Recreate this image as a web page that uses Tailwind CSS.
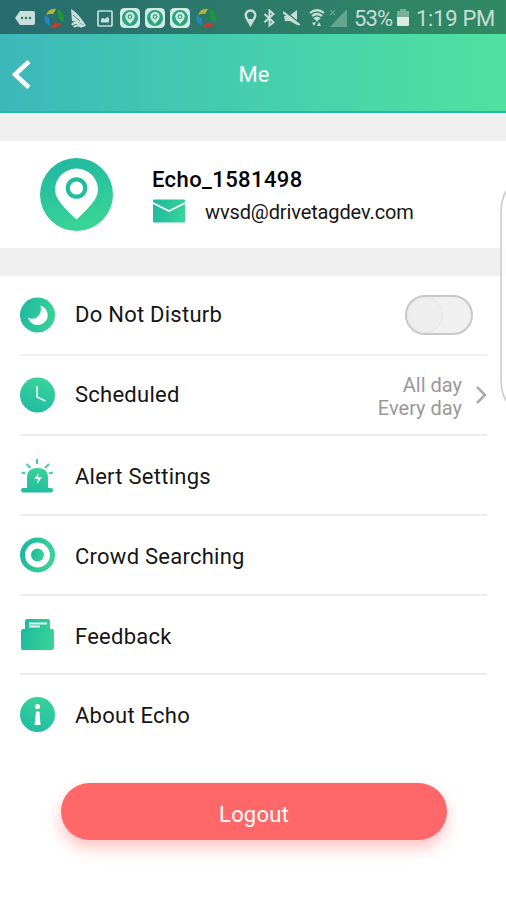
<!DOCTYPE html>
<html lang="en">
<head>
    <meta charset="UTF-8">
    <meta name="viewport" content="width=device-width, initial-scale=1.0">
    <title>Me</title>
    <script src="https://cdn.jsdelivr.net/npm/@tailwindcss/browser@4"></script>
</head>
<body class="relative h-[900px] w-[506px] overflow-hidden bg-white font-[Roboto,sans-serif] text-[22px] text-[#151515]">
    <!-- Shared gradients and symbols -->
    <svg class="absolute h-0 w-0">
        <defs>
            <linearGradient id="down" x1="0" y1="0" x2="0.3" y2="1">
                <stop offset="0" stop-color="#1fb5a3"></stop>
                <stop offset="1" stop-color="#38d395"></stop>
            </linearGradient>
            <linearGradient id="up" x1="0.2" y1="1" x2="0.5" y2="0">
                <stop offset="0" stop-color="#20bba2"></stop>
                <stop offset="1" stop-color="#38d29a"></stop>
            </linearGradient>
            <linearGradient id="across" x1="0" y1="0.3" x2="1" y2="0.5">
                <stop offset="0" stop-color="#1fb8a1"></stop>
                <stop offset="1" stop-color="#37d397"></stop>
            </linearGradient>
            <symbol id="swirl" viewBox="0 0 20 20">
                <path d="M2 7C4 2 8 0 12 1L9 6Q6 5 2 7Z" fill="#b5b82e"></path>
                <path d="M13 1C19 3 21 9 19 14L14 10Q15 6 13 1Z" fill="#1c9b35"></path>
                <path d="M18 15C15 20 10 21 7 19L11 14Q14 16 18 15Z" fill="#c93a31"></path>
                <path d="M6 18C1 16-1 11 1 7L6 11Q5 14 6 18Z" fill="#2387c0"></path>
            </symbol>
            <symbol id="app" viewBox="0 0 20 20">
                <rect width="20" height="20" rx="4.5" fill="#d3eae2"></rect>
                <circle cx="10" cy="10" r="8" fill="#27a57f"></circle>
                <path d="M10 16C7 13 5.3 11 5.3 8.6a4.7 4.7 0 0 1 9.4 0C14.7 11 13 13 10 16Z" fill="#d3eae2"></path>
                <circle cx="10" cy="8.7" r="1.8" fill="none" stroke="#27a57f" stroke-width="1.2"></circle>
            </symbol>
        </defs>
    </svg>

    <!-- Status bar -->
    <div class="flex h-[34px] items-center bg-linear-to-r from-[#286b6f] to-[#318a62] pt-[2px] pl-[14px] text-[#c8ddd5]">
        <svg class="h-4 w-[21px]" viewBox="0 0 21 16">
            <path d="M6 1h13a2 2 0 0 1 2 2v10a2 2 0 0 1-2 2H6L1 8Z" fill="#c8dfdc"></path>
            <circle cx="8" cy="8" r="1.2" fill="#286f6d"></circle>
            <circle cx="12" cy="8" r="1.2" fill="#286f6d"></circle>
            <circle cx="16" cy="8" r="1.2" fill="#286f6d"></circle>
        </svg>
        <svg class="ml-[9px] h-5 w-5"><use href="#swirl"></use></svg>
        <svg class="ml-[6px] h-[19px] w-[17px]" viewBox="0 0 17 19">
            <path d="M1 0C6 3 12 9 16 17L10 14L2 12Z" fill="#c8dfdc"></path>
            <path d="M2 16Q5 12 9 15T15 16M4 18Q7 15 12 18" fill="none" stroke="#c8dfdc" stroke-width="2.200"></path>
            <path d="M3 6l7 6" stroke="#286f6d" stroke-width=".7"></path>
        </svg>
        <svg class="ml-[10px] h-[17px] w-4" viewBox="0 0 16 17">
            <rect x="1" y="1" width="14" height="15" rx="1" fill="none" stroke="#c8dfd9" stroke-width="1.7"></rect>
            <path d="M4 12.500V9l2-1 2 1 2-2 2 1v4.500Z" fill="#c8dfd9"></path>
        </svg>
        <svg class="ml-[7px] h-5 w-5"><use href="#app"></use></svg>
        <svg class="ml-[5px] h-5 w-5"><use href="#app"></use></svg>
        <svg class="ml-[5px] h-5 w-5"><use href="#app"></use></svg>
        <svg class="ml-[6px] h-5 w-5"><use href="#swirl"></use></svg>
        <svg class="ml-[28px] h-[18px] w-[13px]" viewBox="0 0 13 18">
            <path d="M6.500 1.500a4.800 4.800 0 0 0-4.800 4.800c0 3 2.800 5.500 4.800 9.500 2-4 4.800-6.500 4.800-9.500a4.800 4.800 0 0 0-4.800-4.800Z" fill="none" stroke="currentColor" stroke-width="2.400"></path>
            <path d="M3.500 10h6l-3 7Z" fill="currentColor"></path>
        </svg>
        <svg class="ml-[6px] h-[18px] w-[13px]" viewBox="0 0 13 18">
            <path d="M1.500 5l9 8.200L6.500 16.500V1.500l4 3.500-9 8.200" fill="none" stroke="currentColor" stroke-width="2"></path>
        </svg>
        <svg class="ml-[7px] h-[18px] w-[17px]" viewBox="0 0 17 18">
            <path d="M1 7h5l8-6v15l-7-4H2Z" fill="currentColor"></path>
            <path d="M1 1.500l16 13" stroke="#2a7c68" stroke-width="1.500"></path>
            <path d="M0 3l16.500 13" stroke="currentColor" stroke-width="2.200"></path>
        </svg>
        <svg class="ml-[9px] h-[18px] w-4" viewBox="0 0 16 18">
            <path d="M1 4q7-5.500 14 0M3 7q5-4 10 0M5 10q3-2.500 6 0" fill="none" stroke="currentColor" stroke-width="2.200"></path>
            <path d="M6 10h4l-2 3ZM3 13.500h4l-2 3.500ZM8 17h4l-2-4Z" fill="currentColor"></path>
        </svg>
        <svg class="ml-[4px] h-[18px] w-[18px] text-[#65a68f]" viewBox="0 0 18 18">
            <path d="M18 0v18H1Z" fill="currentColor"></path>
            <path d="M1 1l5 5M6 1L1 6" stroke="currentColor" stroke-width="1.200"></path>
        </svg>
        <span class="ml-[7px] w-[39px] pt-[2px] text-[22px] leading-none tracking-[-0.9px] whitespace-nowrap">53%</span>
        <svg class="ml-[4px] h-[18px] w-3" viewBox="0 0 12 18">
            <path d="M3 0h6v2h3v6H0V2h3Z" fill="#7aaf9b"></path>
            <path d="M0 8h12v8q0 1-1 1H1q-1 0-1-1Z" fill="#dce9e3"></path>
        </svg>
        <span class="ml-[7px] pt-[2px] text-[22px] leading-none tracking-[-0.3px] whitespace-nowrap">1:19 PM</span>
    </div>

    <!-- Title bar -->
    <header class="grid h-[79px] grid-cols-[48px_1fr_50px] items-center border-b-2 border-[#25b9a3] bg-linear-to-r from-[#3db8ba] via-[#46cead] to-[#50e1a0] pt-1 text-white">
        <svg class="ml-[11px] h-[30px] w-5" viewBox="0 0 20 30">
            <path d="M18 1.500L4 14.500l14 13" fill="none" stroke="currentColor" stroke-width="4.500"></path>
        </svg>
        <h1 class="pl-1 text-center text-[22px]">Me</h1>
    </header>

    <!-- Profile -->
    <section class="flex h-[163px] border-y-[28px] border-[#f0f0f0] bg-white pl-[39px]">
        <svg class="mt-[16px] h-[74px] w-[74px]" viewBox="0 0 74 74">
            <circle cx="37.500" cy="37.500" r="36.500" fill="url(#down)"></circle>
            <path d="M37.500 62.500C27 52.500 16 42.500 16 33a21.500 21.500 0 0 1 43 0C59 42.500 48 52.500 37.500 62.500Z" fill="#fff"></path>
            <circle cx="37.500" cy="31" r="8.700" fill="none" stroke="#23bc9f" stroke-width="4.200"></circle>
        </svg>
        <div class="ml-[39px] pt-[24px]">
            <p class="text-[22px] leading-[30px] font-medium tracking-[0.4px] text-black">Echo_1581498</p>
            <div class="flex items-center pt-[4px]">
                <svg class="ml-px h-6 w-8" viewBox="0 0 32 24">
                    <rect y=".5" width="32" height="23" rx="1" fill="url(#across)"></rect>
                    <path d="M0 4l16 8 16-8" fill="none" stroke="#fff" stroke-width="1.600"></path>
                </svg>
                <span class="ml-[20px] pt-[2px] text-[20px] leading-[22px] tracking-[-0.12px]">wvsd@drivetagdev.com</span>
            </div>
        </div>
    </section>

    <!-- Settings -->
    <ul class="mr-[19px] ml-5">
        <li class="flex h-20 items-center border-b-2 border-[#f0f0f0]">
            <svg class="h-9 w-9" viewBox="0 0 36 36">
                <circle cx="17.500" cy="18" r="17.500" fill="url(#across)"></circle>
                <path d="M20.500 8.500A10 10 0 1 1 8 20.500C13 24 23 20 20.500 8.500Z" fill="#fff"></path>
            </svg>
            <span class="ml-[19px] pb-[2px] tracking-[0.25px]">Do Not Disturb</span>
            <span class="mr-[14px] ml-auto flex h-10 w-[68px] rounded-full border-2 border-[#c8c8c8] bg-[#f0f0f0]">
                <span class="w-9 rounded-full border border-[#e5e5e5] bg-[#eeeeee]"></span>
            </span>
        </li>
        <li class="flex h-20 items-center border-b-2 border-[#ebebeb]">
            <svg class="h-9 w-9" viewBox="0 0 36 36">
                <circle cx="17.500" cy="18" r="17.500" fill="url(#up)"></circle>
                <path d="M17 9v11l8.500 4" fill="none" stroke="#d9f7ec" stroke-width="1.800"></path>
            </svg>
            <span class="ml-[19px] pb-[2px] tracking-[0.25px]">Scheduled</span>
            <span class="mt-[3px] ml-auto text-right text-[20px] leading-[23px] text-[#999]">All day<br>Every day</span>
            <svg class="ml-[13px] h-[20px] w-[12px]" viewBox="0 0 12 20">
                <path d="M2 2l8 8-8 8" fill="none" stroke="#aaa" stroke-width="2.500"></path>
            </svg>
        </li>
        <li class="flex h-20 items-center border-b-2 border-[#ebebeb]">
            <svg class="h-9 w-9" viewBox="0 0 36 36">
                <path d="M7 31V20q0-9 10.500-9T28 20v11h3q2 0 2 2.200t-2 2.300H3q-2 0-2-2.300T3 31Z" fill="url(#up)"></path>
                <path d="M17 2v5M6.500 7l4 4M29 7l-4 4M1.500 15.500l4 1M33 15.500l-4 1" stroke="#45d0ac" stroke-width="2.200"></path>
                <path d="M19 16l-5 6h4l-1 5 5-7h-4Z" fill="#fff"></path>
            </svg>
            <span class="ml-[19px] pt-[2px] tracking-[0.25px]">Alert Settings</span>
        </li>
        <li class="flex h-20 items-center border-b-2 border-[#ebebeb]">
            <svg class="h-9 w-9" viewBox="0 0 36 36">
                <circle cx="17.500" cy="18" r="15" fill="none" stroke="url(#across)" stroke-width="5"></circle>
                <circle cx="17.500" cy="18" r="6.500" fill="url(#across)"></circle>
            </svg>
            <span class="ml-[19px] pt-[2px] tracking-[0.25px]">Crowd Searching</span>
        </li>
        <li class="flex h-[79px] items-center border-b-2 border-[#ebebeb]">
            <svg class="h-9 w-9" viewBox="0 0 36 36">
                <path d="M5 12V4q0-2 2-2h21q2 0 2 2v8h2q2 0 2 2v17q0 2-2 2H3q-2 0-2-2V14q0-2 2-2Z" fill="url(#across)"></path>
                <path d="M9 6.500h18M9 9.500h11" stroke="#e3faf1" stroke-width="1.800"></path>
            </svg>
            <span class="ml-[19px] pt-[3px] tracking-[0.25px]">Feedback</span>
        </li>
        <li class="flex h-20 items-center">
            <svg class="h-9 w-9" viewBox="0 0 36 36">
                <circle cx="17.500" cy="17.500" r="17.500" fill="url(#up)"></circle>
                <circle cx="17.500" cy="9.500" r="2.600" fill="#fff"></circle>
                <path d="M16 14.500h3.500l1 13.500h-6Z" fill="#fff"></path>
            </svg>
            <span class="ml-[19px] pt-px tracking-[0.25px]">About Echo</span>
        </li>
    </ul>

    <button class="mt-[28px] ml-[61px] h-[57px] w-[386px] rounded-full bg-[#ff6868] pt-[5px] text-[22px] tracking-[0.2px] text-white shadow-[0_8px_16px_rgba(255,104,104,0.4)]">Logout</button>

    <!-- Edge panel handle -->
    <svg class="absolute top-[186px] right-0 h-[220px] w-[6px]" viewBox="0 0 6 220">
        <path d="M7 4Q1 12 1 28V192Q1 208 7 216" fill="#fff" fill-opacity=".8" stroke="#c9c9c9" stroke-width="1.500"></path>
    </svg>
</body>
</html>
